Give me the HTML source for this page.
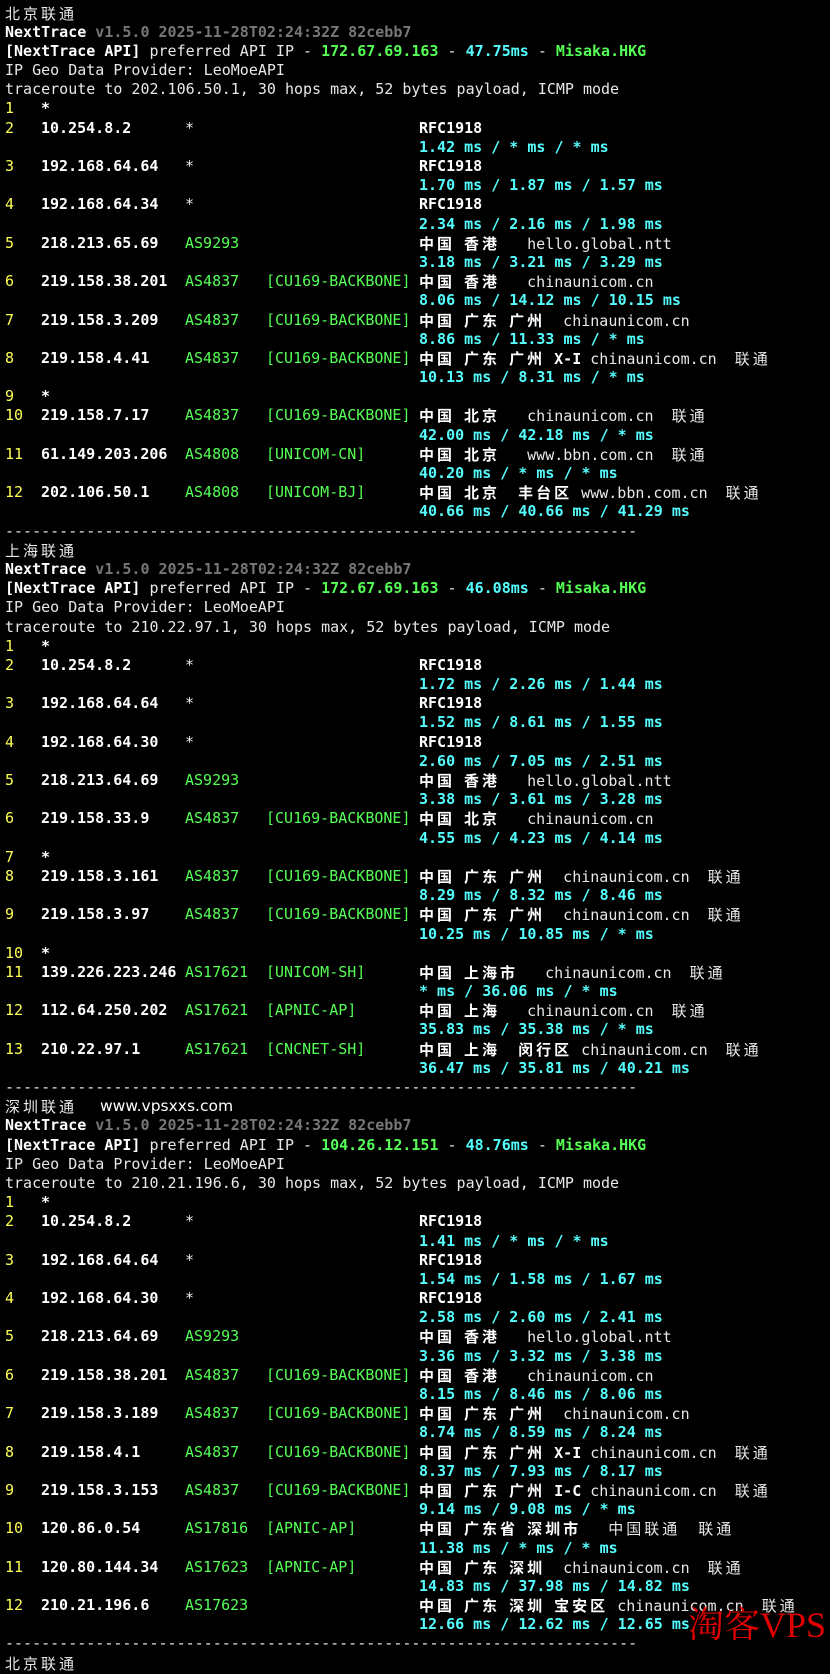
<!DOCTYPE html>
<html><head><meta charset="utf-8"><style>
html,body{margin:0;padding:0;background:#000;}
body{width:830px;height:1642px;overflow:hidden;position:relative;}
#t{position:absolute;left:5px;top:3.5px;font:15px/19.2px "DejaVu Sans Mono","Liberation Mono","Noto Sans CJK SC",monospace;color:#e8e8e8;}
#t div{height:19.2px;white-space:pre;overflow:visible;}
.w{font-family:"Noto Sans CJK SC",sans-serif;letter-spacing:3px;}
b{font-weight:bold;color:#fff;}
.y{color:#ffff55;}
.g{color:#55ff55;}
.G{color:#55ff55;font-weight:bold;}
.c{color:#55ffff;font-weight:bold;}
.d{color:#777;font-weight:bold;}
.h,.ip,.as,.bb{display:inline-block;vertical-align:top;}
.h{width:36px}.ip{width:144px}.as{width:81px}.bb{width:153px}
.ms{padding-left:414px;}
.geo{font-weight:bold;color:#fff}
.n{font-weight:normal;color:#e8e8e8}
.url{position:absolute;left:100px;top:1097px;font:15.5px "DejaVu Sans","Liberation Sans",sans-serif;color:#fff;}
.wm{position:absolute;left:688px;top:1597px;font:36px "Liberation Serif","Noto Serif CJK SC",serif;color:#e00000;}
</style></head><body>
<div id="t"><div><span class="w n">北京联通</span></div><div><b>NextTrace</b><span class="d"> v1.5.0 2025-11-28T02:24:32Z 82cebb7</span></div><div><b>[NextTrace API]</b> preferred API IP - <span class="G">172.67.69.163</span> - <span class="c">47.75ms</span> - <span class="G">Misaka.HKG</span></div><div>IP Geo Data Provider: LeoMoeAPI</div><div>traceroute to 202.106.50.1, 30 hops max, 52 bytes payload, ICMP mode</div><div><span class="h y">1</span><b>*</b></div><div><span class="h y">2</span><b class="ip">10.254.8.2</b><span class="as">*</span><span class="bb"></span><b>RFC1918</b></div><div class="ms"><span class="c">1.42 ms / * ms / * ms</span></div><div><span class="h y">3</span><b class="ip">192.168.64.64</b><span class="as">*</span><span class="bb"></span><b>RFC1918</b></div><div class="ms"><span class="c">1.70 ms / 1.87 ms / 1.57 ms</span></div><div><span class="h y">4</span><b class="ip">192.168.64.34</b><span class="as">*</span><span class="bb"></span><b>RFC1918</b></div><div class="ms"><span class="c">2.34 ms / 2.16 ms / 1.98 ms</span></div><div><span class="h y">5</span><b class="ip">218.213.65.69</b><span class="as g">AS9293</span><span class="bb"></span><span class="geo"><span class="w">中国</span> <span class="w">香港</span>   <span class="n">hello.global.ntt</span></span></div><div class="ms"><span class="c">3.18 ms / 3.21 ms / 3.29 ms</span></div><div><span class="h y">6</span><b class="ip">219.158.38.201</b><span class="as g">AS4837</span><span class="bb g">[CU169-BACKBONE]</span><span class="geo"><span class="w">中国</span> <span class="w">香港</span>   <span class="n">chinaunicom.cn</span></span></div><div class="ms"><span class="c">8.06 ms / 14.12 ms / 10.15 ms</span></div><div><span class="h y">7</span><b class="ip">219.158.3.209</b><span class="as g">AS4837</span><span class="bb g">[CU169-BACKBONE]</span><span class="geo"><span class="w">中国</span> <span class="w">广东</span> <span class="w">广州</span>  <span class="n">chinaunicom.cn</span></span></div><div class="ms"><span class="c">8.86 ms / 11.33 ms / * ms</span></div><div><span class="h y">8</span><b class="ip">219.158.4.41</b><span class="as g">AS4837</span><span class="bb g">[CU169-BACKBONE]</span><span class="geo"><span class="w">中国</span> <span class="w">广东</span> <span class="w">广州</span> X-I <span class="n">chinaunicom.cn  <span class="w">联通</span></span></span></div><div class="ms"><span class="c">10.13 ms / 8.31 ms / * ms</span></div><div><span class="h y">9</span><b>*</b></div><div><span class="h y">10</span><b class="ip">219.158.7.17</b><span class="as g">AS4837</span><span class="bb g">[CU169-BACKBONE]</span><span class="geo"><span class="w">中国</span> <span class="w">北京</span>   <span class="n">chinaunicom.cn  <span class="w">联通</span></span></span></div><div class="ms"><span class="c">42.00 ms / 42.18 ms / * ms</span></div><div><span class="h y">11</span><b class="ip">61.149.203.206</b><span class="as g">AS4808</span><span class="bb g">[UNICOM-CN]</span><span class="geo"><span class="w">中国</span> <span class="w">北京</span>   <span class="n">www.bbn.com.cn  <span class="w">联通</span></span></span></div><div class="ms"><span class="c">40.20 ms / * ms / * ms</span></div><div><span class="h y">12</span><b class="ip">202.106.50.1</b><span class="as g">AS4808</span><span class="bb g">[UNICOM-BJ]</span><span class="geo"><span class="w">中国</span> <span class="w">北京</span>  <span class="w">丰台区</span> <span class="n">www.bbn.com.cn  <span class="w">联通</span></span></span></div><div class="ms"><span class="c">40.66 ms / 40.66 ms / 41.29 ms</span></div><div>----------------------------------------------------------------------</div><div><span class="w n">上海联通</span></div><div><b>NextTrace</b><span class="d"> v1.5.0 2025-11-28T02:24:32Z 82cebb7</span></div><div><b>[NextTrace API]</b> preferred API IP - <span class="G">172.67.69.163</span> - <span class="c">46.08ms</span> - <span class="G">Misaka.HKG</span></div><div>IP Geo Data Provider: LeoMoeAPI</div><div>traceroute to 210.22.97.1, 30 hops max, 52 bytes payload, ICMP mode</div><div><span class="h y">1</span><b>*</b></div><div><span class="h y">2</span><b class="ip">10.254.8.2</b><span class="as">*</span><span class="bb"></span><b>RFC1918</b></div><div class="ms"><span class="c">1.72 ms / 2.26 ms / 1.44 ms</span></div><div><span class="h y">3</span><b class="ip">192.168.64.64</b><span class="as">*</span><span class="bb"></span><b>RFC1918</b></div><div class="ms"><span class="c">1.52 ms / 8.61 ms / 1.55 ms</span></div><div><span class="h y">4</span><b class="ip">192.168.64.30</b><span class="as">*</span><span class="bb"></span><b>RFC1918</b></div><div class="ms"><span class="c">2.60 ms / 7.05 ms / 2.51 ms</span></div><div><span class="h y">5</span><b class="ip">218.213.64.69</b><span class="as g">AS9293</span><span class="bb"></span><span class="geo"><span class="w">中国</span> <span class="w">香港</span>   <span class="n">hello.global.ntt</span></span></div><div class="ms"><span class="c">3.38 ms / 3.61 ms / 3.28 ms</span></div><div><span class="h y">6</span><b class="ip">219.158.33.9</b><span class="as g">AS4837</span><span class="bb g">[CU169-BACKBONE]</span><span class="geo"><span class="w">中国</span> <span class="w">北京</span>   <span class="n">chinaunicom.cn</span></span></div><div class="ms"><span class="c">4.55 ms / 4.23 ms / 4.14 ms</span></div><div><span class="h y">7</span><b>*</b></div><div><span class="h y">8</span><b class="ip">219.158.3.161</b><span class="as g">AS4837</span><span class="bb g">[CU169-BACKBONE]</span><span class="geo"><span class="w">中国</span> <span class="w">广东</span> <span class="w">广州</span>  <span class="n">chinaunicom.cn  <span class="w">联通</span></span></span></div><div class="ms"><span class="c">8.29 ms / 8.32 ms / 8.46 ms</span></div><div><span class="h y">9</span><b class="ip">219.158.3.97</b><span class="as g">AS4837</span><span class="bb g">[CU169-BACKBONE]</span><span class="geo"><span class="w">中国</span> <span class="w">广东</span> <span class="w">广州</span>  <span class="n">chinaunicom.cn  <span class="w">联通</span></span></span></div><div class="ms"><span class="c">10.25 ms / 10.85 ms / * ms</span></div><div><span class="h y">10</span><b>*</b></div><div><span class="h y">11</span><b class="ip">139.226.223.246</b><span class="as g">AS17621</span><span class="bb g">[UNICOM-SH]</span><span class="geo"><span class="w">中国</span> <span class="w">上海市</span>   <span class="n">chinaunicom.cn  <span class="w">联通</span></span></span></div><div class="ms"><span class="c">* ms / 36.06 ms / * ms</span></div><div><span class="h y">12</span><b class="ip">112.64.250.202</b><span class="as g">AS17621</span><span class="bb g">[APNIC-AP]</span><span class="geo"><span class="w">中国</span> <span class="w">上海</span>   <span class="n">chinaunicom.cn  <span class="w">联通</span></span></span></div><div class="ms"><span class="c">35.83 ms / 35.38 ms / * ms</span></div><div><span class="h y">13</span><b class="ip">210.22.97.1</b><span class="as g">AS17621</span><span class="bb g">[CNCNET-SH]</span><span class="geo"><span class="w">中国</span> <span class="w">上海</span>  <span class="w">闵行区</span> <span class="n">chinaunicom.cn  <span class="w">联通</span></span></span></div><div class="ms"><span class="c">36.47 ms / 35.81 ms / 40.21 ms</span></div><div>----------------------------------------------------------------------</div><div><span class="w n">深圳联通</span></div><div><b>NextTrace</b><span class="d"> v1.5.0 2025-11-28T02:24:32Z 82cebb7</span></div><div><b>[NextTrace API]</b> preferred API IP - <span class="G">104.26.12.151</span> - <span class="c">48.76ms</span> - <span class="G">Misaka.HKG</span></div><div>IP Geo Data Provider: LeoMoeAPI</div><div>traceroute to 210.21.196.6, 30 hops max, 52 bytes payload, ICMP mode</div><div><span class="h y">1</span><b>*</b></div><div><span class="h y">2</span><b class="ip">10.254.8.2</b><span class="as">*</span><span class="bb"></span><b>RFC1918</b></div><div class="ms"><span class="c">1.41 ms / * ms / * ms</span></div><div><span class="h y">3</span><b class="ip">192.168.64.64</b><span class="as">*</span><span class="bb"></span><b>RFC1918</b></div><div class="ms"><span class="c">1.54 ms / 1.58 ms / 1.67 ms</span></div><div><span class="h y">4</span><b class="ip">192.168.64.30</b><span class="as">*</span><span class="bb"></span><b>RFC1918</b></div><div class="ms"><span class="c">2.58 ms / 2.60 ms / 2.41 ms</span></div><div><span class="h y">5</span><b class="ip">218.213.64.69</b><span class="as g">AS9293</span><span class="bb"></span><span class="geo"><span class="w">中国</span> <span class="w">香港</span>   <span class="n">hello.global.ntt</span></span></div><div class="ms"><span class="c">3.36 ms / 3.32 ms / 3.38 ms</span></div><div><span class="h y">6</span><b class="ip">219.158.38.201</b><span class="as g">AS4837</span><span class="bb g">[CU169-BACKBONE]</span><span class="geo"><span class="w">中国</span> <span class="w">香港</span>   <span class="n">chinaunicom.cn</span></span></div><div class="ms"><span class="c">8.15 ms / 8.46 ms / 8.06 ms</span></div><div><span class="h y">7</span><b class="ip">219.158.3.189</b><span class="as g">AS4837</span><span class="bb g">[CU169-BACKBONE]</span><span class="geo"><span class="w">中国</span> <span class="w">广东</span> <span class="w">广州</span>  <span class="n">chinaunicom.cn</span></span></div><div class="ms"><span class="c">8.74 ms / 8.59 ms / 8.24 ms</span></div><div><span class="h y">8</span><b class="ip">219.158.4.1</b><span class="as g">AS4837</span><span class="bb g">[CU169-BACKBONE]</span><span class="geo"><span class="w">中国</span> <span class="w">广东</span> <span class="w">广州</span> X-I <span class="n">chinaunicom.cn  <span class="w">联通</span></span></span></div><div class="ms"><span class="c">8.37 ms / 7.93 ms / 8.17 ms</span></div><div><span class="h y">9</span><b class="ip">219.158.3.153</b><span class="as g">AS4837</span><span class="bb g">[CU169-BACKBONE]</span><span class="geo"><span class="w">中国</span> <span class="w">广东</span> <span class="w">广州</span> I-C <span class="n">chinaunicom.cn  <span class="w">联通</span></span></span></div><div class="ms"><span class="c">9.14 ms / 9.08 ms / * ms</span></div><div><span class="h y">10</span><b class="ip">120.86.0.54</b><span class="as g">AS17816</span><span class="bb g">[APNIC-AP]</span><span class="geo"><span class="w">中国</span> <span class="w">广东省</span> <span class="w">深圳市</span>   <span class="n"><span class="w">中国联通</span>  <span class="w">联通</span></span></span></div><div class="ms"><span class="c">11.38 ms / * ms / * ms</span></div><div><span class="h y">11</span><b class="ip">120.80.144.34</b><span class="as g">AS17623</span><span class="bb g">[APNIC-AP]</span><span class="geo"><span class="w">中国</span> <span class="w">广东</span> <span class="w">深圳</span>  <span class="n">chinaunicom.cn  <span class="w">联通</span></span></span></div><div class="ms"><span class="c">14.83 ms / 37.98 ms / 14.82 ms</span></div><div><span class="h y">12</span><b class="ip">210.21.196.6</b><span class="as g">AS17623</span><span class="bb"></span><span class="geo"><span class="w">中国</span> <span class="w">广东</span> <span class="w">深圳</span> <span class="w">宝安区</span> <span class="n">chinaunicom.cn  <span class="w">联通</span></span></span></div><div class="ms"><span class="c">12.66 ms / 12.62 ms / 12.65 ms</span></div><div>----------------------------------------------------------------------</div><div><span class="w n">北京联通</span></div></div>
<div class="url">www.vpsxxs.com</div>
<div class="wm">淘客VPS</div>
</body></html>
